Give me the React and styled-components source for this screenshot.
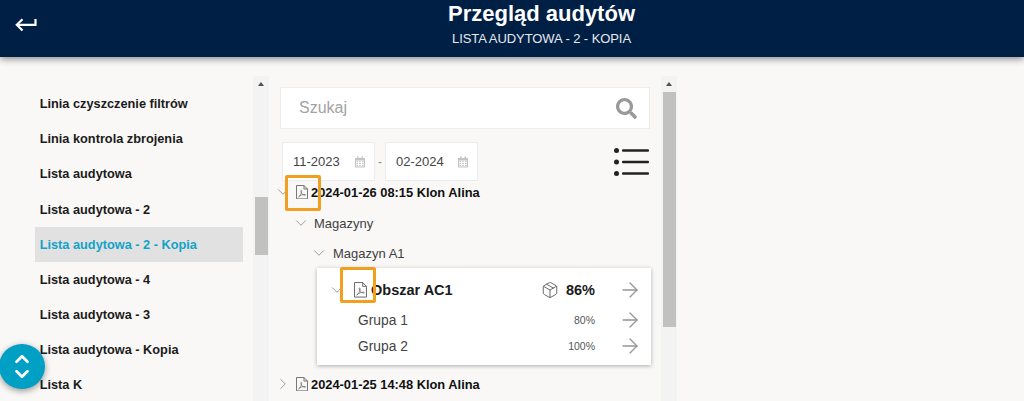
import styled, { createGlobalStyle } from "styled-components";
import { ChevronDown, ChevronRight, ChevronUp, ArrowRight, Package } from "lucide-react";
import { FaSearch } from "react-icons/fa";

const audits = [
  "Linia czyszczenie filtrów",
  "Linia kontrola zbrojenia",
  "Lista audytowa",
  "Lista audytowa - 2",
  "Lista audytowa - 2 - Kopia",
  "Lista audytowa - 4",
  "Lista audytowa - 3",
  "Lista audytowa - Kopia",
  "Lista K",
];

const GlobalStyle = createGlobalStyle`
  html, body {
    margin: 0;
    height: 100%;
    overflow: hidden;
    background: #f9f8f7;
    font-family: "Liberation Sans", Arial, sans-serif;
  }
  * { box-sizing: border-box; }
`;

const Page = styled.div`
  position: relative;
  width: 1024px;
  height: 401px;
  overflow: hidden;
  display: flex;
  flex-direction: column;
`;

const Header = styled.header`
  position: relative;
  z-index: 2;
  flex: 0 0 57px;
  padding-left: 59px;
  background: #001f45;
  box-shadow: 0 2px 7px rgba(0, 0, 0, 0.45);
  color: #fff;
  display: flex;
  flex-direction: column;
  align-items: center;
`;

const BackButton = styled.div`
  position: absolute;
  left: 15px;
  top: 18px;
  line-height: 0;
`;

const Title = styled.h1`
  margin: 1px 0 0 0;
  font-size: 22px;
  line-height: 26px;
  font-weight: 700;
`;

const Subtitle = styled.div`
  margin-top: 4px;
  font-size: 13px;
  line-height: 15px;
  letter-spacing: -0.08px;
  color: #e6e9ee;
`;

const Body = styled.main`
  flex: 1;
  min-height: 0;
  display: flex;
  padding-top: 19px;
`;

const Sidebar = styled.nav`
  width: 253px;
  padding: 10.2px 10px 0 35px;
  display: flex;
  flex-direction: column;
  overflow: hidden;
`;

const SidebarItem = styled.div`
  flex: 0 0 35.1px;
  display: flex;
  align-items: center;
  padding-left: 4.7px;
  font-size: 12.75px;
  font-weight: 700;
  color: ${(props) => (props.$active ? "#12a3c8" : "#1b1b1b")};
  background: ${(props) => (props.$active ? "#e1e1e1" : "transparent")};
`;

const Scrollbar = styled.div`
  flex: 0 0 16px;
  background: #f3f3f3;
  display: flex;
  flex-direction: column;
  align-items: center;
`;

const ScrollArrow = styled.div`
  flex: 0 0 16px;
  display: flex;
  align-items: center;
  justify-content: center;
  &::before {
    content: "";
    border-left: 3.5px solid transparent;
    border-right: 3.5px solid transparent;
    border-bottom: 4px solid #505050;
  }
`;

const ScrollThumb = styled.div`
  width: 13px;
  height: ${(props) => props.$height}px;
  margin-top: ${(props) => props.$top}px;
  background: #c1c1c0;
`;

const Content = styled.section`
  width: 392px;
  padding: 11px 11px 0 11px;
  display: flex;
  flex-direction: column;
`;

const SearchBar = styled.div`
  flex: none;
  height: 42px;
  background: #fff;
  border: 1px solid #ececec;
  display: flex;
  align-items: center;
  justify-content: space-between;
  padding: 0 12px 0 18px;
  font-size: 16px;
  color: #a3a3a3;
`;

const FilterRow = styled.div`
  flex: none;
  margin-top: 13px;
  padding-left: 2px;
  display: flex;
  align-items: center;
`;

const DateBox = styled.div`
  width: 93px;
  height: 39px;
  background: #fff;
  border: 1px solid #ececec;
  display: flex;
  align-items: center;
  justify-content: space-between;
  padding: 0 8px 0 10px;
  font-size: 13px;
  color: #444;
`;

const Dash = styled.span`
  width: 10px;
  text-align: center;
  font-size: 12px;
  color: #888;
`;

const ListToggle = styled.div`
  margin-left: auto;
  margin-right: 1px;
  line-height: 0;
`;

const Tree = styled.div`
  flex: none;
  margin-left: -10px;
  display: flex;
  flex-direction: column;
`;

const Row = styled.div`
  flex: none;
  display: flex;
  align-items: center;
  height: ${(props) => props.$height}px;
  padding-left: ${(props) => props.$indent}px;
  color: ${(props) => (props.$bold ? "#111" : "#3f3f3f")};
  font-size: ${(props) => (props.$bold ? "12.85px" : "13px")};
  font-weight: ${(props) => (props.$bold ? 700 : 400)};
  svg.chevron {
    color: #9a9a9a;
    flex: none;
  }
`;

const RowLabel = styled.span`
  margin-left: ${(props) => props.$gap}px;
`;

const Card = styled.div`
  flex: none;
  margin: 5px 0 0 47px;
  padding: 5px 0 6px;
  width: 334px;
  height: 97px;
  background: #fff;
  box-shadow: 0 1px 4px rgba(0, 0, 0, 0.3);
  display: flex;
  flex-direction: column;
`;

const CardTitle = styled.div`
  flex: none;
  height: 34px;
  display: flex;
  align-items: center;
  padding: 0 9px 0 11px;
  font-size: 14.5px;
  font-weight: 700;
  color: #1a1a1a;
  svg.chevron {
    color: #9a9a9a;
    flex: none;
  }
`;

const CubeIcon = styled(Package)`
  margin-left: auto;
  color: #666;
  flex: none;
`;

const Percent = styled.span`
  margin-left: 7px;
`;

const GroupRow = styled.div`
  flex: none;
  height: 26px;
  display: flex;
  align-items: center;
  padding: 0 9px 0 41px;
  font-size: 13.8px;
  color: #444;
  span {
    margin-left: auto;
    font-size: 10.5px;
    color: #555;
  }
`;

const Arrow = styled(ArrowRight)`
  margin-left: 23px;
  color: #959595;
  flex: none;
`;

const PdfSlot = styled.span`
  position: relative;
  display: inline-flex;
  flex: none;
  margin: 0 ${(props) => props.$gap}px 0 ${(props) => props.$left}px;
`;

const Highlight = styled.span`
  position: absolute;
  left: ${(props) => props.$x}px;
  top: ${(props) => props.$y}px;
  width: 36px;
  height: 36px;
  border: 3px solid #f0a01e;
  border-radius: 2px;
`;

const Fab = styled.div`
  position: absolute;
  left: -1px;
  top: 344px;
  width: 46px;
  height: 45px;
  border-radius: 50%;
  background: #009fc4;
  box-shadow: 0 2px 6px rgba(0, 0, 0, 0.4);
  color: #fff;
  display: flex;
  flex-direction: column;
  align-items: center;
  justify-content: center;
  z-index: 3;
  svg + svg {
    margin-top: -7px;
  }
`;

const BackIcon = () => (
  <svg width="22" height="14" viewBox="0 0 22 14" fill="none" stroke="#fff" strokeWidth="2.2">
    <path d="M20.500 1v5.800H2.500" />
    <path d="M7.500 1.200 1.800 6.800l5.700 5.700" />
  </svg>
);

const PdfIcon = ({ size = 12 }) => (
  <svg width={size} height={size * 1.2} viewBox="0 0 12 14.4" fill="none" stroke="#666" strokeWidth="0.9">
    <path d="M.5.5h7.500l3.500 3.500v9.900h-11z" />
    <path d="M8 .5v3.500h3.500" />
    <path d="M2.500 12c1.800-1.100 3.100-3.800 3.100-5.800 0-1.200-.9-1-.8 0 .2 1.800 1.700 3.700 4 4.100 1 .2 1-.9 0-.9-2 0-4.700.9-6.300 2.600z" strokeWidth="0.7" />
  </svg>
);

const CalendarIcon = () => (
  <svg width="12" height="12" viewBox="0 0 12 12" fill="#c4c4c4">
    <path d="M1 2h10v9.500h-10z" />
    <path d="M2 4.500h8v6h-8z" fill="#fff" />
    <path d="M2.500 5h1.500v1.200h-1.500zM5.200 5h1.500v1.200h-1.500zM8 5h1.500v1.200h-1.500zM2.500 7h1.500v1.200h-1.500zM5.200 7h1.500v1.200h-1.500zM8 7h1.500v1.200h-1.500zM2.500 9h1.500v1.200h-1.500zM5.200 9h1.500v1.200h-1.500zM8 9h1.500v1.200h-1.500z" />
    <path d="M3 .5h1.500v2.500h-1.500zM7.500 .5h1.500v2.500h-1.500z" />
  </svg>
);

const ListIcon = () => (
  <svg width="35" height="28" viewBox="0 0 35 28" fill="#222">
    <circle cx="2.500" cy="2.500" r="2.500" />
    <circle cx="2.500" cy="14" r="2.500" />
    <circle cx="2.500" cy="25.500" r="2.500" />
    <rect x="8" y="1.200" width="27" height="2.600" rx="1" />
    <rect x="8" y="12.700" width="27" height="2.600" rx="1" />
    <rect x="8" y="24.200" width="27" height="2.600" rx="1" />
  </svg>
);

const App = () => {
  return (
    <Page>
      <GlobalStyle />
      <Header>
        <BackButton>
          <BackIcon />
        </BackButton>
        <Title>Przegląd audytów</Title>
        <Subtitle>LISTA AUDYTOWA - 2 - KOPIA</Subtitle>
      </Header>
      <Body>
        <Sidebar>
          {audits.map((name) => (
            <SidebarItem key={name} $active={name === "Lista audytowa - 2 - Kopia"}>
              {name}
            </SidebarItem>
          ))}
        </Sidebar>
        <Scrollbar>
          <ScrollArrow />
          <ScrollThumb $top={105} $height={58} />
        </Scrollbar>
        <Content>
          <SearchBar>
            Szukaj
            <FaSearch size={21} color="#999" />
          </SearchBar>
          <FilterRow>
            <DateBox>
              11-2023
              <CalendarIcon />
            </DateBox>
            <Dash>-</Dash>
            <DateBox>
              02-2024
              <CalendarIcon />
            </DateBox>
            <ListToggle>
              <ListIcon />
            </ListToggle>
          </FilterRow>
          <Tree>
            <Row $bold $height={22} $indent={4}>
              <ChevronDown className="chevron" size={18} strokeWidth={1.3} />
              <PdfSlot $left={4} $gap={3}>
                <PdfIcon />
                <Highlight $x={-11} $y={-10} />
              </PdfSlot>
              2024-01-26 08:15 Klon Alina
            </Row>
            <Row $height={40} $indent={22}>
              <ChevronDown className="chevron" size={18} strokeWidth={1.3} />
              <RowLabel $gap={4}>Magazyny</RowLabel>
            </Row>
            <Row $height={20} $indent={40}>
              <ChevronDown className="chevron" size={18} strokeWidth={1.3} />
              <RowLabel $gap={5}>Magazyn A1</RowLabel>
            </Row>
            <Card>
              <CardTitle>
                <ChevronDown className="chevron" size={18} strokeWidth={1.3} />
                <PdfSlot $left={8} $gap={4}>
                  <PdfIcon size={13} />
                  <Highlight $x={-14} $y={-15} />
                </PdfSlot>
                Obszar AC1
                <CubeIcon size={18} strokeWidth={1.3} />
                <Percent>86%</Percent>
                <Arrow size={24} strokeWidth={1.3} />
              </CardTitle>
              <GroupRow>
                Grupa 1<span>80%</span>
                <Arrow size={24} strokeWidth={1.3} />
              </GroupRow>
              <GroupRow>
                Grupa 2<span>100%</span>
                <Arrow size={24} strokeWidth={1.3} />
              </GroupRow>
            </Card>
            <Row $bold $height={38} $indent={4}>
              <ChevronRight className="chevron" size={18} strokeWidth={1.3} />
              <PdfSlot $left={4} $gap={3}>
                <PdfIcon />
              </PdfSlot>
              2024-01-25 14:48 Klon Alina
            </Row>
          </Tree>
        </Content>
        <Scrollbar>
          <ScrollArrow />
          <ScrollThumb $top={0} $height={235} />
        </Scrollbar>
      </Body>
      <Fab>
        <ChevronUp size={22} strokeWidth={3} />
        <ChevronDown size={22} strokeWidth={3} />
      </Fab>
    </Page>
  );
};

export default App;
